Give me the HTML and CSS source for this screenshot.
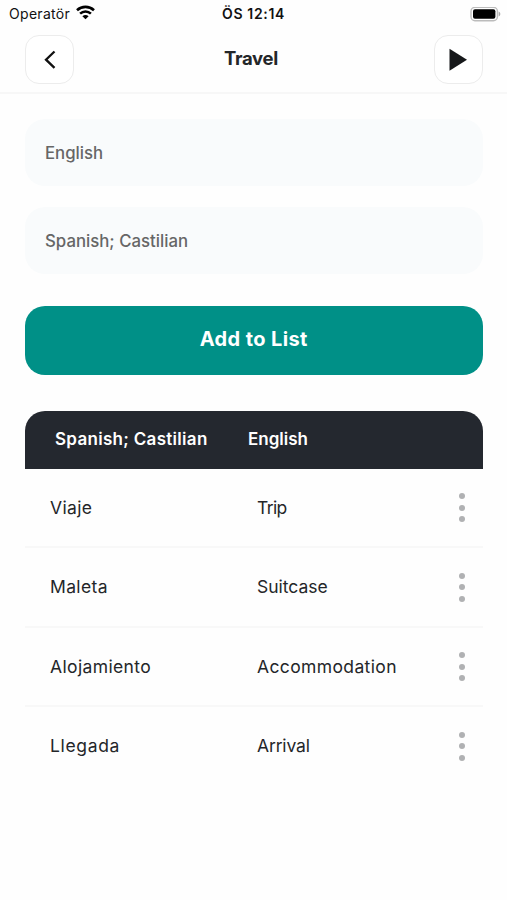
FILE: index.html
```html
<!DOCTYPE html>
<html lang="en">
<head>
<meta charset="utf-8">
<title>Travel</title>
<link rel="stylesheet" href="styles.css">
</head>
<body>
<div class="status">
  <div class="carrier"><span class="carrier-name">Operatör</span>
    <svg class="wifi" width="19" height="15" viewBox="0 0 19 15" fill="none" stroke="#000" stroke-width="2.6"><path d="M1 5.2C5.8.7 13.2.7 18 5.2M4.1 8.6c3.1-2.9 7.7-2.9 10.8 0"/><path d="M9.5 14.2 6.4 11.2c1.7-1.6 4.5-1.6 6.2 0Z" fill="#000" stroke="none"/></svg>
  </div>
  <div class="clock">ÖS 12:14</div>
  <div class="battery"><svg width="31" height="15" viewBox="0 0 31 15"><rect x="1" y=".3" width="26.4" height="13.4" rx="4" fill="#fff" stroke="#bcbcbc" stroke-width="1.4"/><rect x="3" y="2.3" width="22.4" height="9.4" rx="2" fill="#000"/><path d="M28.6 4.5v5c2.3-1.1 2.3-3.9 0-5Z" fill="#aaa"/></svg></div>
</div>
<header class="header">
  <button class="icon-btn" aria-label="Back"><svg width="48" height="48" viewBox="0 0 48 48"><path d="m28.5 15.5-8.5 8.2 8.5 8.2" fill="none" stroke="#111" stroke-width="2.3"/></svg></button>
  <h1 class="title">Travel</h1>
  <button class="icon-btn" aria-label="Play"><svg width="48" height="48" viewBox="0 0 48 48"><path d="M14.5 12.8v22l17.5-11Z" fill="#16181a"/></svg></button>
</header>
<main class="content">
  <div class="field">English</div>
  <div class="field">Spanish; Castilian</div>
  <button class="add">Add to List</button>
  <section class="table">
    <div class="thead"><span class="head-es">Spanish; Castilian</span><span>English</span></div>
    <div class="row"><span class="loose">Viaje</span><span class="tight">Trip</span><i class="dots"><b></b><b></b><b></b></i></div>
    <div class="row"><span class="loose">Maleta</span><span>Suitcase</span><i class="dots"><b></b><b></b><b></b></i></div>
    <div class="row"><span class="loose">Alojamiento</span><span class="loose">Accommodation</span><i class="dots"><b></b><b></b><b></b></i></div>
    <div class="row"><span class="looser">Llegada</span><span class="snug">Arrival</span><i class="dots"><b></b><b></b><b></b></i></div>
  </section>
</main>
</body>
</html>
```
FILE: styles.css
```css
* { box-sizing: border-box; }
body { margin: 0; background: #fefefe; color: #242629; font-family: Inter, "Liberation Sans", sans-serif; }
button { font: inherit; border: 0; padding: 0; }
.status { height: 27px; padding: 0 6px 0 9px; display: grid; grid-template-columns: 1fr auto 1fr; align-items: center; color: #111; }
.carrier { display: flex; align-items: center; gap: 6px; font-size: 14px; }
.carrier-name { letter-spacing: .3px; }
.wifi { display: block; margin-top: -2px; }
.clock { margin-right: 3px; font-size: 14px; font-weight: 600; letter-spacing: .65px; }
.battery { justify-self: end; height: 15px; }
.header { height: 67px; padding: 8px 24px 0 25px; display: flex; justify-content: space-between; align-items: flex-start; border-bottom: 2px solid #f7f7f7; }
.icon-btn { width: 49px; height: 49px; border: 1px solid #ececec; border-radius: 14px; background: #fff; display: grid; place-items: center; overflow: hidden; }
.title { margin: 0 6px 0 0; font-size: 18.5px; line-height: 46px; font-weight: 700; letter-spacing: -.3px; }
.content { padding: 25px 24.5px 0 25px; display: flex; flex-direction: column; }
.field { height: 67px; margin-bottom: 21px; padding: 1px 20px 0; border-radius: 20px; background: #f9fbfc; display: flex; align-items: center; color: #666; font-size: 16.8px; font-weight: 500; }
.add { height: 69px; margin-top: 11px; padding-bottom: 3px; border-radius: 20px; background: #009087; color: #fff; font-size: 20px; font-weight: 700; letter-spacing: .4px; }
.table { margin-top: 36px; }
.thead { height: 57.5px; padding: 0 30px 2px; border-radius: 20px 20px 0 0; background: #24282f; color: #fff; display: grid; grid-template-columns: 193px 1fr; align-items: center; font-size: 17px; font-weight: 600; }
.head-es { letter-spacing: .3px; }
.row { height: 79.5px; padding: 0 18px 0 25px; display: grid; grid-template-columns: 207px 1fr auto; align-items: center; border-bottom: 2px solid #f8f8f8; font-size: 17.5px; }
.row:last-child { border-bottom-color: transparent; }
.loose { letter-spacing: .37px; }
.looser { letter-spacing: .65px; }
.snug { letter-spacing: -.15px; }
.tight { letter-spacing: -.6px; }
.dots { display: flex; flex-direction: column; gap: 5.6px; padding-top: 1px; }
.dots b { width: 6px; height: 6px; border-radius: 50%; background: #b0b1b3; }
```
